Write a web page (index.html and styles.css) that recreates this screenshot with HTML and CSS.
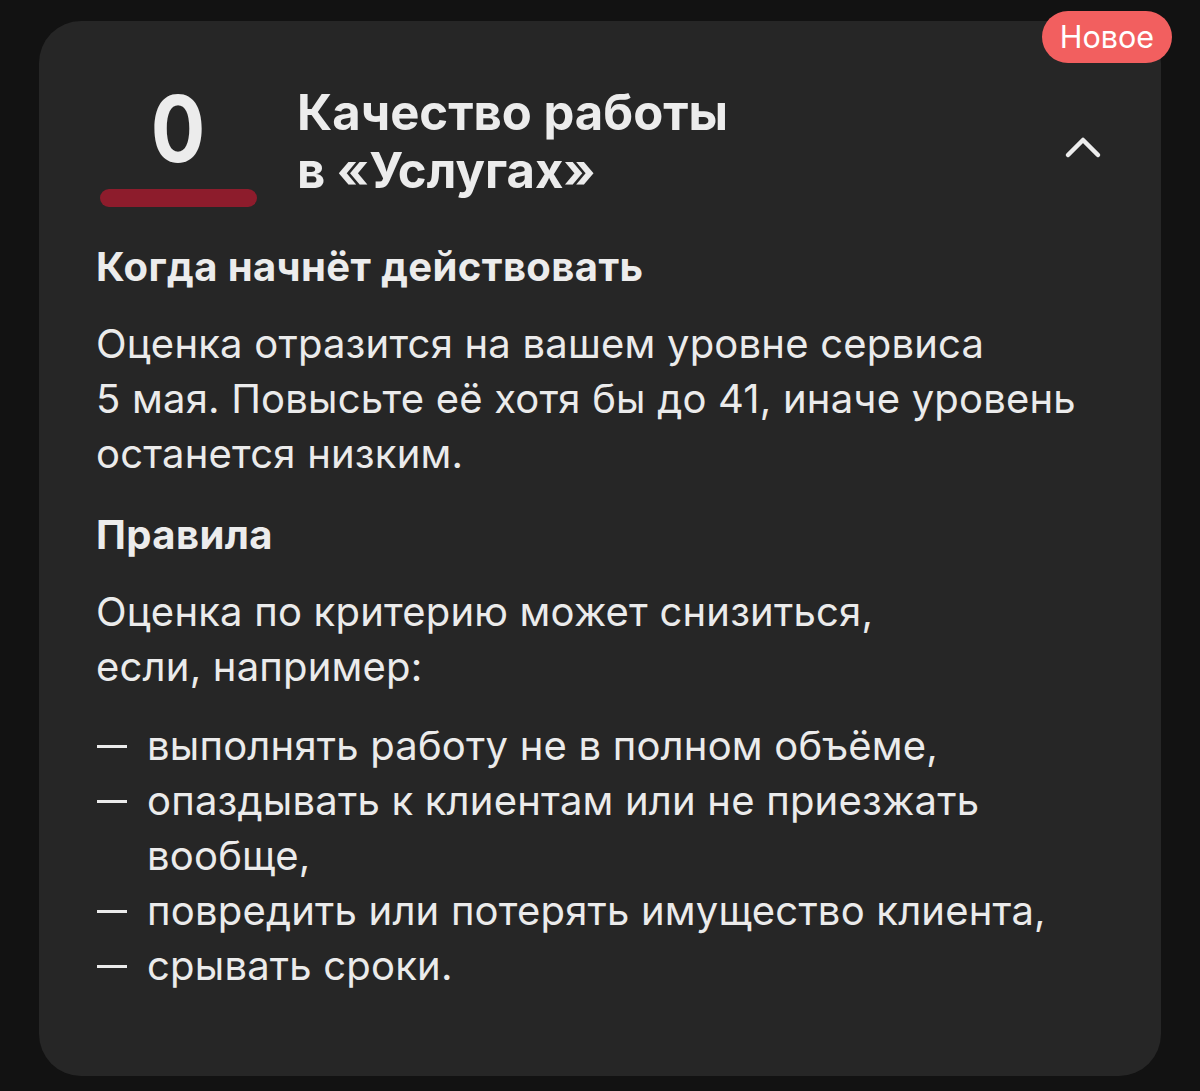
FILE: index.html
```html
<!DOCTYPE html>
<html lang="ru">
<head>
    <meta charset="UTF-8">
    <meta name="viewport" content="width=device-width, initial-scale=1.0">
    <title>Качество работы в «Услугах»</title>
    <link rel="stylesheet" href="styles.css">
</head>
<body>
    <div class="card">
        <span class="badge">Новое</span>

        <div class="card-head">
            <div class="score">
                <div class="score-value">0</div>
                <div class="score-bar"></div>
            </div>
            <h1 class="card-title">Качество работы<br>в «Услугах»</h1>
            <button class="toggle" aria-label="Свернуть">
                <svg width="38" height="24" viewBox="0 0 38 24">
                    <path d="M4 20 L19 5 L34 20" fill="none" stroke="#ececec" stroke-width="4.5" stroke-linecap="round" stroke-linejoin="round"/>
                </svg>
            </button>
        </div>

        <section class="block">
            <h2>Когда начнёт действовать</h2>
            <p>Оценка отразится на вашем уровне сервиса<br>5 мая. Повысьте её хотя бы до 41, иначе уровень<br>останется низким.</p>
        </section>

        <section class="block">
            <h2>Правила</h2>
            <p>Оценка по критерию может снизиться,<br>если, например:</p>
            <ul class="dash-list">
                <li>выполнять работу не в полном объёме,</li>
                <li>опаздывать к клиентам или не приезжать<br>вообще,</li>
                <li>повредить или потерять имущество клиента,</li>
                <li>срывать сроки.</li>
            </ul>
        </section>
    </div>
</body>
</html>
```

FILE: styles.css
```css
body {
    margin: 0;
    padding: 21px 39px 15px;
    background-color: #121212;
    font-family: 'Inter', 'Roboto', sans-serif;
    color: #ebebeb;
}

.card {
    position: relative;
    background-color: #262626;
    border-radius: 42px;
    padding: 62px 59px 83px 57px;
}

.badge {
    position: absolute;
    top: -10px;
    right: -11px;
    height: 52px;
    padding: 0 18px;
    border-radius: 26px;
    background-color: #f25f5f;
    color: #fff;
    font-size: 30.5px;
    line-height: 52px;
}

.card-head {
    display: flex;
    align-items: center;
}

.score {
    width: 157px;
    margin-left: 4px;
    display: flex;
    flex-direction: column;
    align-items: center;
}

.score-value {
    font-size: 92px;
    font-weight: 700;
    line-height: 92px;
    color: #ececec;
    transform: scaleX(0.88);
}

.score-bar {
    width: 157px;
    height: 18px;
    margin-top: 14px;
    border-radius: 9px;
    background-color: #8d1c2c;
}

.card-title {
    flex: 1;
    margin: 1px 0 0 40px;
    font-size: 49px;
    font-weight: 700;
    line-height: 58px;
    color: #ececec;
    align-self: flex-start;
}

.toggle {
    background: none;
    border: 0;
    padding: 0;
    width: 38px;
    height: 24px;
    margin-top: 4px;
}

.block {
    margin-top: 38px;
}

.block + .block {
    margin-top: 32px;
}

h2 {
    margin: 0 0 27px;
    font-size: 40px;
    font-weight: 700;
    line-height: 44px;
    letter-spacing: 0.4px;
    color: #ececec;
}

p {
    margin: 0;
    font-size: 40px;
    line-height: 55px;
    letter-spacing: 0.2px;
}

.block p + .dash-list {
    margin-top: 24px;
}

.dash-list {
    list-style: none;
    margin: 0;
    padding: 0;
    font-size: 40px;
    line-height: 55px;
    letter-spacing: 0.2px;
}

.dash-list li {
    position: relative;
    padding-left: 51px;
}

.dash-list li::before {
    content: '';
    position: absolute;
    left: 1px;
    top: 27px;
    width: 30px;
    height: 2.5px;
    background-color: #ebebeb;
}
```
